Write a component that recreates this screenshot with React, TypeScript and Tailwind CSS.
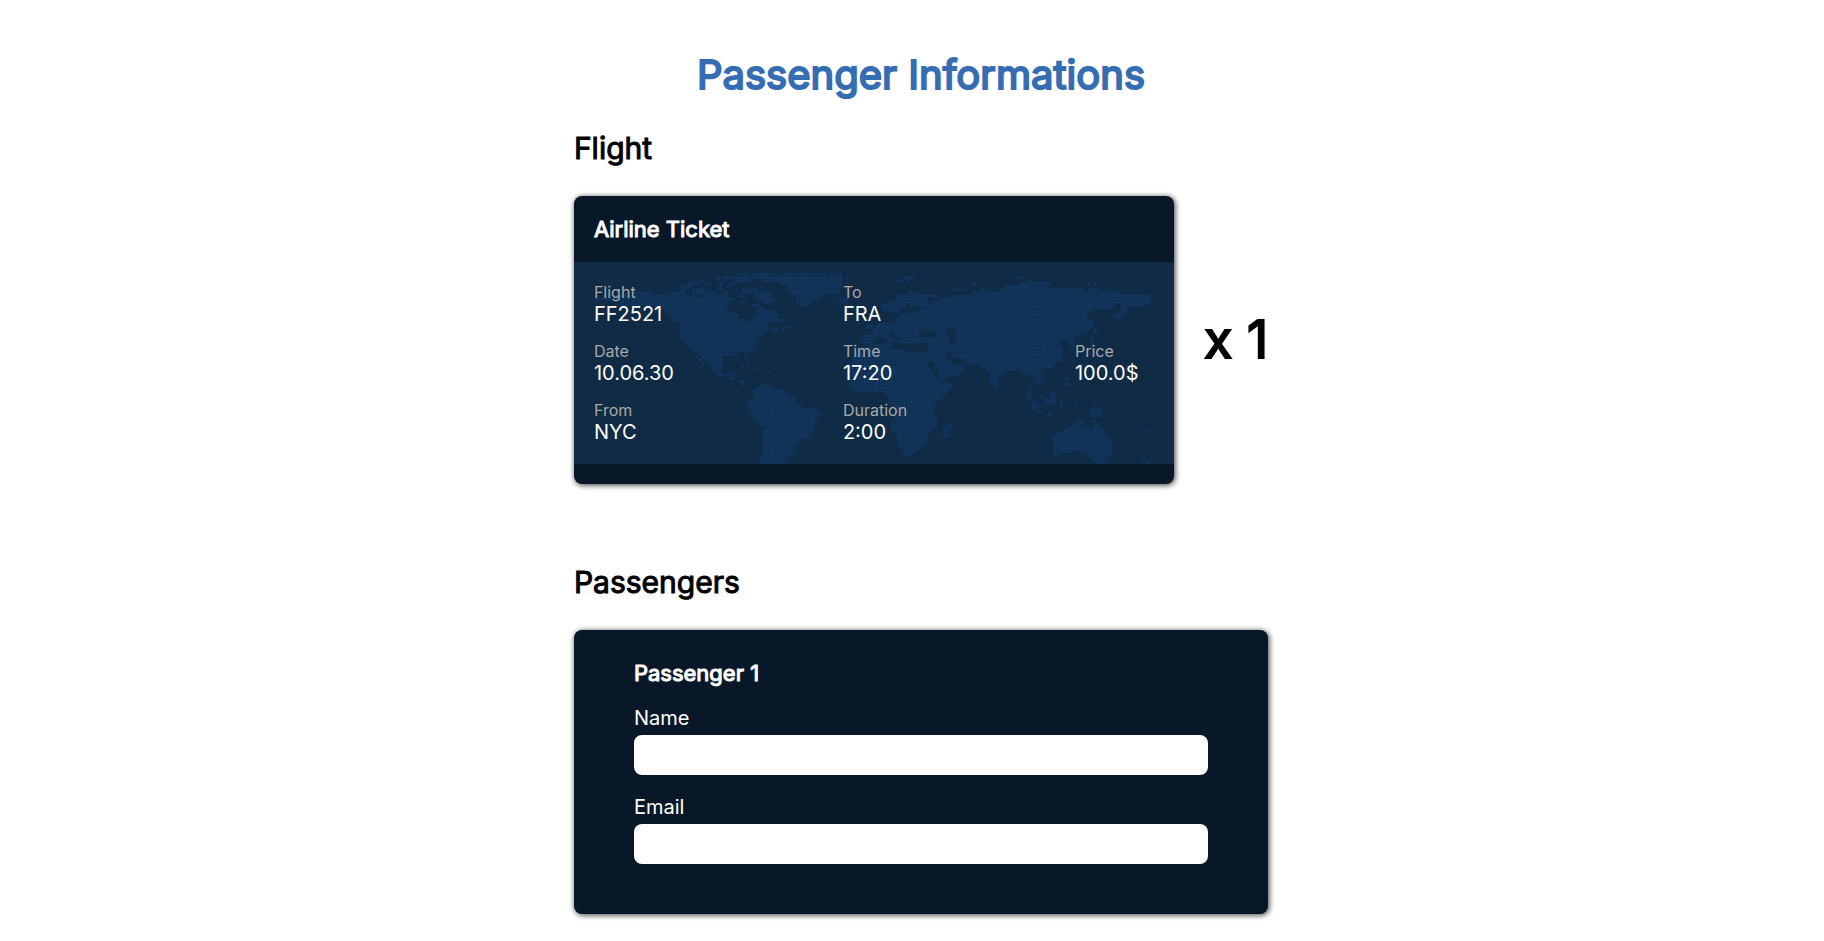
import React from "react";

type Point = [number, number];
type Box = [number, number, number, number];

const CELL = 9.18;
const ORIGIN_X = 5.9;
const ORIGIN_Y = 33;
const COLS = 194;
const ROWS = 63;

function shape(dx: number, dy: number, coords: string): Point[] {
  return coords.split(" ").map((pair) => {
    const [x, y] = pair.split(",").map(Number);
    return [x + dx, y + dy];
  });
}

function boxes(dx: number, dy: number, list: Box[]): Box[] {
  return list.map(([x0, y0, x1, y1]) => [x0 + dx, y0 + dy, x1 + dx, y1 + dy]);
}

const land: Point[][] = [
  // North and Central America
  shape(
    -42,
    -216,
    "230,306 275,306 275,316 330,316 330,306 360,306 360,314 405,314 405,323 435,323 435,314 490,314 490,323 528,323 528,332 510,334 505,344 500,352 500,364 535,374 535,382 562,384 565,399 575,399 575,384 588,372 588,354 567,351 567,342 600,342 600,354 648,362 648,372 658,374 658,384 675,384 685,396 630,400 630,419 620,424 605,440 592,447 592,466 582,474 580,488 564,488 564,507 556,507 555,486 525,495 490,500 490,545 500,555 515,540 537,540 527,552 530,567 555,567 555,592 546,592 540,577 515,568 490,560 462,556 452,530 440,518 410,487 400,485 385,475 372,460 360,452 360,400 340,390 325,375 310,362 270,350 190,349 172,349 180,333 105,330 105,322 180,316"
  ),
  // Greenland
  shape(
    290,
    18,
    "388,15 465,15 465,24 475,24 475,15 495,15 495,24 505,24 505,15 514,15 514,61 503,61 503,80 458,80 458,89 448,98 420,98 420,107 412,107 412,116 382,116 382,107 374,107 374,80 356,80 356,70 346,70 346,52 328,52 328,42 272,42 272,33 310,33 310,24 388,24"
  ),
  // South America
  shape(
    -42,
    -216,
    "600,575 618,575 618,585 640,585 650,595 668,595 668,603 682,612 705,620 705,635 730,648 750,655 780,658 780,677 770,685 762,705 762,722 752,742 725,745 717,755 712,770 703,785 697,795 677,800 677,826 600,826 600,800 612,795 612,712 595,712 585,690 575,680 563,665 563,630 583,620 583,603 575,603 575,594 590,594"
  ),
  // Europe, Asia and Africa
  shape(
    858,
    -36,
    "150,126 178,126 178,134 230,134 240,144 262,144 270,135 300,135 325,135 345,128 358,118 382,118 382,126 408,126 412,115 422,126 430,108 475,106 475,97 568,97 568,106 560,115 670,115 670,125 780,125 783,135 877,135 877,160 855,162 855,170 810,170 800,162 765,162 765,170 745,178 725,180 700,180 680,190 680,200 700,210 700,225 690,240 680,245 670,260 645,264 640,292 630,288 622,272 605,265 598,270 600,285 605,290 605,330 590,338 585,348 545,358 540,362 550,378 548,400 540,410 530,400 522,385 505,378 490,365 475,358 450,362 430,368 415,385 418,400 410,418 400,412 390,395 383,378 383,360 372,355 350,340 315,340 318,352 305,372 290,378 265,385 255,396 278,405 270,425 245,445 222,470 222,495 232,505 232,530 205,545 205,570 195,585 180,600 155,617 130,617 130,600 112,590 112,560 95,545 95,510 103,500 103,480 85,455 85,435 65,425 50,430 -10,430 -38,395 -38,345 -20,315 0,292 35,284 0,284 0,257 35,257 38,235 55,222 80,214 100,214 112,196 85,190 85,180 67,180 67,165 85,155 95,150 112,134 150,134"
  ),
  // Madagascar
  shape(858, -36, "262,516 278,516 270,545 262,565 245,572 245,550 255,530"),
  // Kamchatka
  shape(858, -36, "785,162 800,162 800,192 785,205 782,216 765,210 765,192 785,190"),
  // Australia and New Guinea
  shape(
    858,
    -36,
    "650,515 665,508 672,525 695,533 700,508 708,508 712,520 735,545 735,555 756,572 756,605 745,628 690,628 680,612 650,600 635,608 600,608 595,618 579,618 579,572 569,572 569,553 600,550 615,535 640,522"
  ),
  shape(858, -36, "675,470 720,470 728,490 718,497 690,497 690,480"),
  // Sumatra and Borneo
  shape(858, -36, "495,430 515,430 520,445 535,458 540,470 520,472 512,460 500,445"),
  shape(858, -36, "570,430 587,430 587,468 560,468 552,450 565,445"),
];

const water: Point[][] = [
  shape(858, -36, "178,245 192,236 203,246 215,238 232,255 232,264 178,264"),
  shape(858, -36, "262,238 288,238 288,282 270,282 270,258 262,250"),
  shape(858, -36, "92,284 120,278 150,284 205,284 205,310 150,310 135,302 92,302"),
  shape(858, -36, "40,275 60,258 70,262 92,278 60,284 40,284"),
  shape(858, -36, "92,248 104,248 130,272 112,274 92,256"),
  shape(858, -36, "205,330 218,335 235,370 245,388 265,385 262,396 240,396 222,372 207,350"),
  shape(858, -36, "262,312 275,312 285,328 318,330 318,342 300,348 280,340 262,322"),
  shape(858, -36, "205,144 235,144 230,153 218,162 205,156"),
  shape(858, -36, "122,170 145,162 145,172 185,170 185,180 150,190 122,190 112,206 104,206 104,190 122,184"),
];

const islands: Box[] = [
  ...boxes(290, 18, [
    [198, 15, 233, 24], [245, 15, 318, 24], [338, 15, 382, 24], [525, 24, 532, 33],
    [142, 24, 150, 42], [160, 24, 318, 33], [85, 33, 103, 42], [160, 33, 168, 42],
    [190, 33, 235, 42], [50, 42, 85, 52], [105, 42, 122, 52], [150, 42, 160, 61],
    [178, 42, 196, 52], [30, 52, 66, 61], [168, 52, 180, 61], [30, 61, 48, 70],
    [66, 61, 103, 70], [113, 61, 120, 70], [140, 61, 160, 70], [190, 61, 206, 70],
    [215, 61, 261, 70], [30, 70, 48, 80], [66, 70, 140, 80], [160, 70, 178, 89],
    [215, 70, 240, 80], [252, 70, 300, 89], [206, 80, 225, 89], [262, 89, 300, 98],
    [308, 89, 318, 98], [206, 98, 234, 107], [272, 98, 308, 107], [337, 174, 365, 183],
    [308, 183, 318, 192], [327, 183, 336, 192], [300, 192, 308, 201], [505, 89, 530, 107],
  ]),
  ...boxes(-42, -216, [
    [405, 496, 415, 505], [414, 505, 424, 515], [424, 515, 433, 525], [546, 528, 556, 538],
    [564, 528, 574, 538], [583, 538, 592, 547], [630, 547, 640, 556],
  ]),
  ...boxes(858, -36, [
    [130, 78, 168, 87], [103, 87, 130, 96], [140, 87, 150, 96], [280, 116, 300, 125],
    [300, 107, 308, 116], [328, 97, 354, 106], [466, 78, 495, 87], [502, 87, 512, 96],
    [680, 97, 692, 107], [698, 97, 708, 107], [692, 115, 720, 125], [738, 115, 746, 125],
    [708, 218, 718, 227], [700, 235, 708, 253], [708, 244, 718, 253], [737, 236, 746, 245],
    [690, 262, 700, 282], [20, 226, 38, 235], [410, 412, 419, 422], [605, 366, 614, 376],
    [597, 375, 606, 385], [615, 384, 624, 394], [615, 403, 633, 412], [505, 412, 514, 430],
    [541, 440, 550, 449], [520, 465, 532, 478], [532, 478, 541, 487], [560, 486, 577, 496],
    [597, 450, 606, 478], [606, 460, 614, 468], [597, 496, 606, 505], [615, 496, 624, 505],
    [643, 458, 653, 468], [672, 458, 682, 468], [698, 458, 708, 468], [735, 478, 746, 487],
    [726, 496, 735, 505], [868, 534, 877, 543], [697, 628, 745, 637], [706, 637, 727, 645],
    [848, 618, 858, 628], [858, 628, 876, 645],
  ]),
];

function inside(polygon: Point[], x: number, y: number): boolean {
  let hit = false;
  for (let i = 0, j = polygon.length - 1; i < polygon.length; j = i++) {
    const [xi, yi] = polygon[i];
    const [xj, yj] = polygon[j];
    if (yi > y !== yj > y && x < ((xj - xi) * (y - yi)) / (yj - yi) + xi) hit = !hit;
  }
  return hit;
}

function isLand(x: number, y: number): boolean {
  if (islands.some(([x0, y0, x1, y1]) => x >= x0 && x < x1 && y >= y0 && y < y1)) return true;
  if (water.some((p) => inside(p, x, y))) return false;
  return land.some((p) => inside(p, x, y));
}

function dotPath(): string {
  let d = "";
  for (let row = 0; row < ROWS; row++) {
    for (let col = 0; col < COLS; col++) {
      const x = ORIGIN_X + col * CELL;
      const y = ORIGIN_Y + row * CELL;
      if (isLand(x + CELL / 2, y + CELL / 2)) {
        d += `M${(x + 0.6).toFixed(1)} ${(y + 0.6).toFixed(1)}h8v8h-8z`;
      }
    }
  }
  return d;
}

const mapPath = dotPath();

function WorldMap() {
  return (
    <svg
      className="absolute inset-0 h-full w-full"
      viewBox="0 0 1800 606"
      preserveAspectRatio="xMidYMid slice"
      aria-hidden="true"
    >
      <path d={mapPath} fill="#12365d" />
    </svg>
  );
}

function Detail({ label, value }: { label: string; value: string }) {
  return (
    <div>
      <dt className="text-base leading-[19px] text-[#a9a9a9]">{label}</dt>
      <dd className="text-xl leading-6 text-white">{value}</dd>
    </div>
  );
}

function Ticket() {
  return (
    <article className="w-[600px] overflow-hidden rounded-lg bg-[#091829] shadow-[1px_1px_5px_1px_rgba(0,0,0,0.6)]">
      <h3 className="p-5 text-[22px] leading-[26px] text-white [-webkit-text-stroke:1px]">Airline Ticket</h3>
      <div className="relative bg-[#0f2b46] px-5 pt-[21px] pb-5">
        <WorldMap />
        <div className="relative grid grid-cols-[249fr_232fr_79fr] items-center">
          <dl className="flex flex-col gap-4">
            <Detail label="Flight" value="FF2521" />
            <Detail label="Date" value="10.06.30" />
            <Detail label="From" value="NYC" />
          </dl>
          <dl className="flex flex-col gap-4">
            <Detail label="To" value="FRA" />
            <Detail label="Time" value="17:20" />
            <Detail label="Duration" value="2:00" />
          </dl>
          <dl>
            <Detail label="Price" value="100.0$" />
          </dl>
        </div>
      </div>
      <div className="h-5" />
    </article>
  );
}

function Field({ id, label, type }: { id: string; label: string; type: string }) {
  return (
    <div className="flex flex-col gap-[5px]">
      <label htmlFor={id} className="text-xl leading-6 text-white">
        {label}
      </label>
      <input id={id} name={id} type={type} className="h-10 w-full rounded-lg bg-white px-3 text-xl text-black" />
    </div>
  );
}

export default function App() {
  return (
    <main className="flex justify-center bg-white pt-[50px] pb-7 pl-[18px] font-['Inter',sans-serif] text-black">
      <div className="flex flex-col">
        <h1 className="text-center text-[40px] leading-[50px] text-[#356db5] [-webkit-text-stroke:2px]">
          Passenger Informations
        </h1>
        <section className="mt-[30px]">
          <h2 className="text-[30px] leading-[36px] [-webkit-text-stroke:1px]">Flight</h2>
          <div className="mt-[30px] flex items-center gap-[30px]">
            <Ticket />
            <p className="text-[52px] leading-[64px] [-webkit-text-stroke:2px]">x 1</p>
          </div>
        </section>
        <section className="mt-20">
          <h2 className="text-[30px] leading-[36px] [-webkit-text-stroke:1px]">Passengers</h2>
          <form className="mt-[30px] rounded-lg bg-[#091829] px-[60px] pt-[30px] pb-[50px] shadow-[1px_1px_5px_1px_rgba(0,0,0,0.6)]">
            <fieldset>
              <legend className="text-[22px] leading-[26px] text-white [-webkit-text-stroke:1px]">Passenger 1</legend>
              <div className="mt-5 flex flex-col gap-5">
                <Field id="name" label="Name" type="text" />
                <Field id="email" label="Email" type="email" />
              </div>
            </fieldset>
          </form>
        </section>
      </div>
    </main>
  );
}
